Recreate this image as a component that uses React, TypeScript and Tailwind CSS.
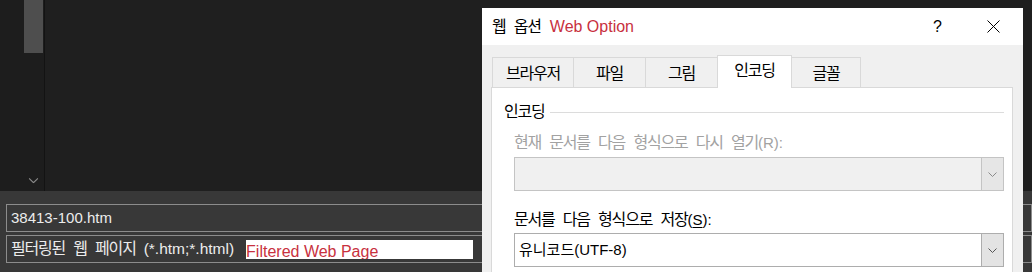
import React from 'react'

const FONT = "font-['Liberation_Sans','Noto_Sans_CJK_KR',sans-serif]"

/** Korean run: larger glyphs, tighter advance, to match the system Hangul face. */
function K({ children, className = '' }: { children: React.ReactNode; className?: string }) {
  return <span className={`text-[16px] tracking-[-1.2px] [word-spacing:5px] ${className}`}>{children}</span>
}

function Chevron({ className = '' }: { className?: string }) {
  return (
    <svg width="9" height="5" viewBox="0 0 9 5" className={className}>
      <path d="M0.5 0.5 L4.5 4.5 L8.5 0.5" fill="none" stroke="currentColor" strokeWidth="1" />
    </svg>
  )
}

function Combo({ disabled, value }: { disabled?: boolean; value?: string }) {
  return (
    <div
      className={`flex h-[34px] w-[490px] border ${
        disabled ? 'border-[#c4c4c4] bg-[#f0f0f0]' : 'border-[#adadad] bg-white'
      }`}
    >
      <div className="flex flex-1 items-center pl-[4px] text-[15px] text-black">{value}</div>
      <div
        className={`flex w-[22px] items-center justify-center border-l ${
          disabled ? 'border-[#c4c4c4] bg-[#e6e6e6] text-[#8a8a8a]' : 'border-[#adadad] bg-[#e3e3e3] text-[#555]'
        }`}
      >
        <Chevron />
      </div>
    </div>
  )
}

const TABS = [
  { label: '브라우저', w: 'w-[82px]' },
  { label: '파일', w: 'w-[73px]' },
  { label: '그림', w: 'w-[73px]' },
  { label: '인코딩', w: 'w-[75px]', active: true },
  { label: '글꼴', w: 'w-[70px]' }
]

function WebOptionDialog() {
  return (
    <div className="absolute left-[482px] top-[8px] flex h-[270px] w-[541px] flex-col bg-[#f0f0f0]">
      {/* title bar */}
      <div className="flex h-[37px] items-center bg-white pl-[10px]">
        <K className="text-black">웹 옵션</K>
        <span className="ml-[9px] text-[16px] text-[#c8313e]">Web Option</span>
        <span className="ml-auto text-[16px] text-black">?</span>
        <svg width="13" height="13" viewBox="0 0 13 13" className="ml-[45px] mr-[23px]">
          <path d="M0.5 0.5 L12.5 12.5 M12.5 0.5 L0.5 12.5" stroke="#000" strokeWidth="1" />
        </svg>
      </div>

      {/* tabs */}
      <div className="mt-[10px] flex h-[32px] items-end pl-[10px]">
        {TABS.map((t, i) =>
          t.active ? (
            <div
              key={t.label}
              className={`relative z-10 -mb-px -ml-px flex h-[33px] ${t.w} items-start justify-center border border-b-0 border-[#d9d9d9] bg-white pt-[3px] text-black`}
            >
              <K>{t.label}</K>
            </div>
          ) : (
            <div
              key={t.label}
              className={`flex h-[30px] ${t.w} ${i > 0 ? '-ml-px' : ''} items-center justify-center border border-b-0 border-[#d9d9d9] bg-[#f0f0f0] pt-[2px] text-black`}
            >
              <K>{t.label}</K>
            </div>
          )
        )}
      </div>

      {/* tab page */}
      <div className="ml-[9px] flex w-[522px] flex-1 flex-col border border-[#d9d9d9] bg-white pr-[8px]">
        <div className="mt-[15px] flex h-[18px] items-center pl-[12px]">
          <K className="text-black">인코딩</K>
          <div className="ml-[5px] h-px flex-1 bg-[#dcdcdc]" />
        </div>
        <div className="flex flex-col pl-[22px]">
          <div className="mt-[13px] flex h-[18px] items-center text-[15px] text-[#a2a2a2]">
            <K>현재 문서를 다음 형식으로 다시 열기</K>
            <span>(R):</span>
          </div>
          <div className="mt-[5px]">
            <Combo disabled />
          </div>
          <div className="mt-[20px] flex h-[18px] items-center text-[15px] text-black">
            <K>문서를 다음 형식으로 저장</K>
            <span>
              (<span className="underline underline-offset-2">S</span>):
            </span>
          </div>
          <div className="mt-[4px]">
            <Combo value={'유니코드(UTF-8)'} />
          </div>
        </div>
      </div>
    </div>
  )
}

export default function App() {
  return (
    <div className={`relative h-[272px] w-[1032px] overflow-hidden bg-[#1f1f1f] ${FONT}`}>
      <div className="flex h-[191px]">
        <div className="flex w-[45px] flex-col border-r border-[#131313] bg-[#1d1d1d]">
          <div className="ml-[24px] h-[53px] w-[19px] bg-[#4e4e4e]" />
          <Chevron className="mb-[8px] ml-[29px] mt-auto scale-110 text-[#8a8a8a]" />
        </div>
        <div className="flex-1 bg-[#1f1f1f]" />
      </div>

      <div className="flex h-[81px] flex-col bg-[#383838] pl-[6px] pt-[13px]">
        <div className="flex h-[28px] items-center border border-[#8c8c8c] pl-[4px] text-[15px] text-[#ececec]">
          38413-100.htm
        </div>
        <div className="mt-[3px] flex h-[28px] items-center border border-[#8c8c8c] pl-[4px] text-[15px] text-[#ececec]">
          <K>필터링된 웹 페이지</K>
          <span className="ml-[8px] text-[15.5px]">(*.htm;*.html)</span>
          <div className="ml-[12px] flex h-[19px] w-[227px] items-end overflow-hidden bg-white">
            <span className="-mb-[2px] text-[16px] leading-[19px] text-[#c8313e]">Filtered Web Page</span>
          </div>
        </div>
      </div>

      <WebOptionDialog />
    </div>
  )
}
